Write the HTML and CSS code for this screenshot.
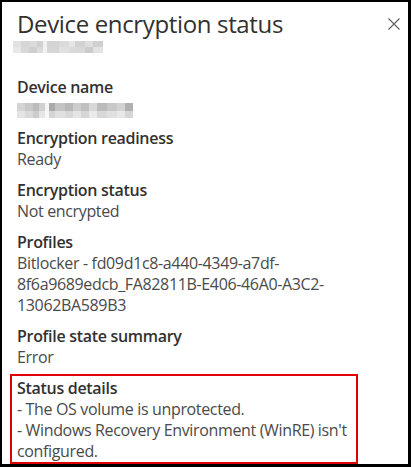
FILE: index.html
```html
<!DOCTYPE html>
<html lang="en">
<head>
<meta charset="utf-8">
<title>Device encryption status</title>
<link rel="stylesheet" href="styles.css">
</head>
<body>
<div class="panel">
  <div class="header">
    <h1 class="title">Device encryption status</h1>
    <button class="close" aria-label="Close">
      <svg width="12" height="12" viewBox="0 0 12 12"><path d="M0.5 0.5 L11.5 11.5 M11.5 0.5 L0.5 11.5" stroke="#605e5c" stroke-width="1.1" fill="none"/></svg>
    </button>
  </div>
  <div class="subtitle-blur"></div>
  <div class="fields">
    <div class="field">
      <div class="label">Device name</div>
      <div class="value"><div class="name-blur"></div></div>
    </div>
    <div class="field">
      <div class="label">Encryption readiness</div>
      <div class="value">Ready</div>
    </div>
    <div class="field">
      <div class="label">Encryption status</div>
      <div class="value">Not encrypted</div>
    </div>
    <div class="field">
      <div class="label">Profiles</div>
      <div class="value">Bitlocker - fd09d1c8-a440-4349-a7df-<br>8f6a9689edcb_FA82811B-E406-46A0-A3C2-<br>13062BA589B3</div>
    </div>
    <div class="field">
      <div class="label">Profile state summary</div>
      <div class="value">Error</div>
    </div>
    <div class="field field-highlight">
      <div class="label">Status details</div>
      <div class="value">- The OS volume is unprotected.<br>- Windows Recovery Environment (WinRE) isn't<br>configured.</div>
    </div>
  </div>
</div>
</body>
</html>
```
FILE: styles.css
```css
html, body {
  margin: 0;
  padding: 0;
  background: #ffffff;
}
.panel {
  box-sizing: border-box;
  width: 411px;
  height: 467px;
  border-style: solid;
  border-color: #000000;
  border-width: 2px 3px 3px 2px;
  padding: 6px 8px 0 15px;
  overflow: hidden;
  font-family: "Segoe UI", "Open Sans", sans-serif;
  color: #323130;
}
.header {
  display: flex;
  align-items: center;
  justify-content: space-between;
  height: 32px;
}
.title {
  margin: 0;
  font-size: 24px;
  line-height: 32px;
  font-weight: 400;
  letter-spacing: -0.35px;
  color: #323130;
}
.close {
  border: 0;
  background: none;
  padding: 0;
  width: 12px;
  height: 12px;
  display: flex;
}
.subtitle-blur {
  margin: 1px 0 0 -4px;
  width: 90px;
  height: 12px;
  background:
    linear-gradient(90deg, #e2e2e2 0 8px, #d6d6d6 8px 16px, #dadada 16px 24px, #d0d0d0 24px 30px, #f0f0f0 30px 34px, #d4d4d4 34px 46px, #dadada 46px 56px, #e6e6e6 56px 62px, #d2d2d2 62px 72px, #dedede 72px 80px, #d0d0d0 80px 90px) top / 100% 6px no-repeat,
    linear-gradient(90deg, #e8e8e8 0 8px, #d8d8d8 8px 16px, #cfcfcf 16px 24px, #dcdcdc 24px 30px, #f2f2f2 30px 34px, #d6d6d6 34px 46px, #e0e0e0 46px 56px, #dadada 56px 62px, #d8d8d8 62px 72px, #cccccc 72px 80px, #e2e2e2 80px 90px) bottom / 100% 6px no-repeat;
}
.fields {
  margin-top: 24px;
  display: flex;
  flex-direction: column;
  gap: 10px;
}
.label {
  font-size: 16px;
  line-height: 21px;
  font-weight: 600;
  letter-spacing: -0.3px;
  color: #323130;
}
.value {
  font-size: 16px;
  line-height: 21px;
  letter-spacing: -0.35px;
  color: #4a4a4a;
}
.name-blur {
  margin-top: 5px;
  width: 116px;
  height: 15px;
  background:
    linear-gradient(90deg, #d4d4d4 0 8px, #c8c8c8 8px 16px, #bcbcbc 16px 22px, #d0d0d0 22px 28px, #f4f4f4 28px 32px, #aaaaaa 32px 38px, #c4c4c4 38px 48px, #b8b8b8 48px 56px, #cccccc 56px 64px, #c0c0c0 64px 72px, #d8d8d8 72px 80px, #bcbcbc 80px 90px, #c8c8c8 90px 100px, #d2d2d2 100px 108px, #b0b0b0 108px 116px) top / 100% 8px no-repeat,
    linear-gradient(90deg, #e4e4e4 0 8px, #dadada 8px 16px, #cccccc 16px 22px, #e6e6e6 22px 28px, #f8f8f8 28px 32px, #d4d4d4 32px 38px, #e0e0e0 38px 48px, #d8d8d8 48px 56px, #e4e4e4 56px 64px, #d6d6d6 64px 72px, #eaeaea 72px 80px, #d8d8d8 80px 90px, #e0e0e0 90px 100px, #e8e8e8 100px 108px, #d6d6d6 108px 116px) bottom / 100% 7px no-repeat;
}
.field-highlight {
  margin-top: -4px;
  margin-left: -7px;
  width: 348px;
  box-sizing: border-box;
  border: 2px solid #e00000;
  padding: 2px 5px 0 5px;
}
```
